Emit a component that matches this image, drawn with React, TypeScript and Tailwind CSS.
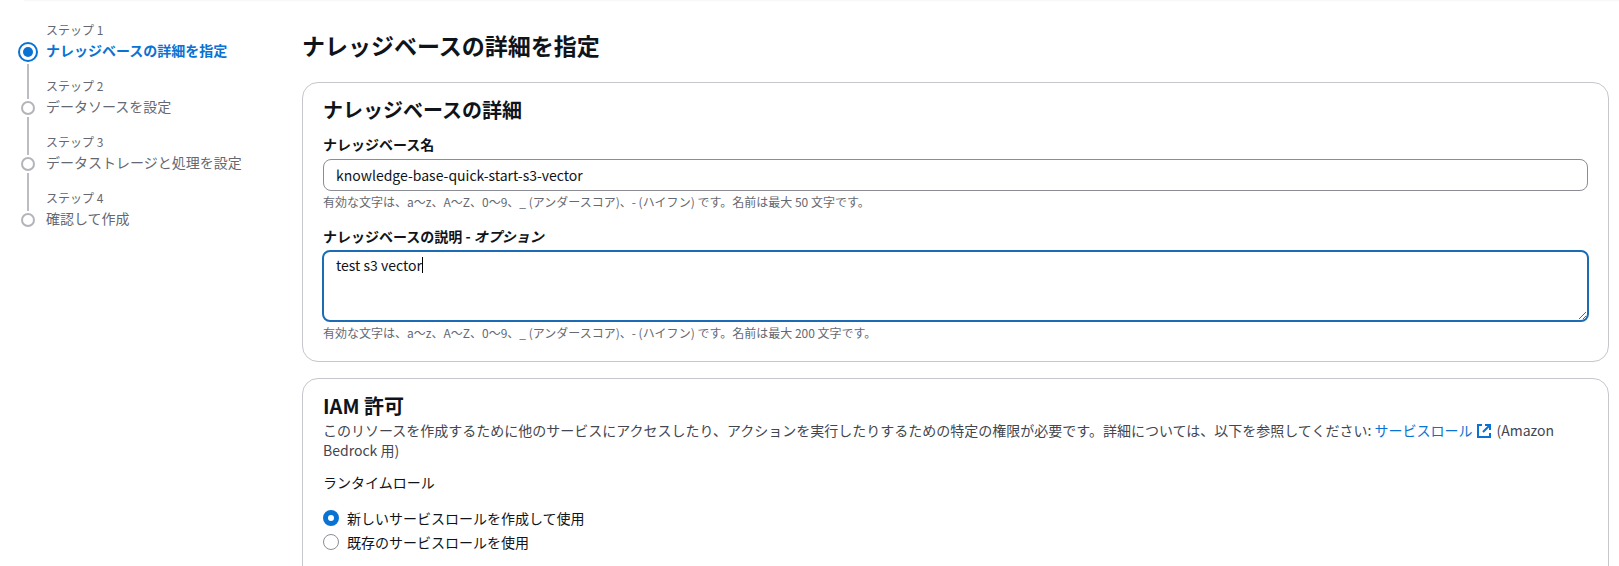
import React from 'react';

const steps = [
  'ナレッジベースの詳細を指定',
  'データソースを設定',
  'データストレージと処理を設定',
  '確認して作成',
];

const StepNav: React.FC = () => (
  <nav className="w-[302px] shrink-0 pt-[18px] pl-[18px]">
    <ol>
      {steps.map((title, i) => (
        <li key={title} className="flex gap-2">
          {/* Marker and the line that leads to the next step */}
          <div className="flex w-5 shrink-0 flex-col items-center pt-[22px] -mb-[22px]">
            <svg className="size-5 shrink-0" viewBox="0 0 20 20" fill="none">
              {i === 0 ? (
                <>
                  <circle cx="10" cy="10" r="9" stroke="#0972d3" strokeWidth="2" />
                  <circle cx="10" cy="10" r="5" fill="#0972d3" />
                </>
              ) : (
                <circle cx="10" cy="10" r="6" stroke="#b4b4bb" strokeWidth="2" />
              )}
            </svg>
            {i < steps.length - 1 && (
              <div className={i === 0 ? 'mt-0.5 -mb-px w-0.5 grow bg-[#bcbcc2]' : '-my-px w-0.5 grow bg-[#bcbcc2]'} />
            )}
          </div>
          <div className="pb-4">
            <p className="text-xs/5 text-[#656871]">ステップ {i + 1}</p>
            {i === 0 ? (
              <p aria-current="step" className="text-sm/5 font-bold text-[#0972d3]">{title}</p>
            ) : (
              <p className="text-sm/5 text-[#656871]">{title}</p>
            )}
          </div>
        </li>
      ))}
    </ol>
  </nav>
);

const ExternalIcon: React.FC = () => (
  <svg className="mx-1 inline-block size-4 align-[-3px]" viewBox="0 0 16 16" fill="none" stroke="currentColor" strokeWidth="2">
    <path d="M6 2H2v12h12v-4" />
    <path d="M9 2h5v5M14 2L7 9" />
  </svg>
);

const App: React.FC = () => {
  return (
    <div className="h-screen overflow-hidden bg-white font-['Noto_Sans_CJK_JP',sans-serif] text-[#0f141a]">
      {/* Soft edge under the top bar */}
      <div className="ml-6 h-0.5 bg-linear-to-b from-[#f6f6f7] to-white" />

      <div className="flex">
        <StepNav />

        <main className="min-w-0 grow pr-[10px]">
          <h1 className="pt-7 pb-[22px] text-[23px]/[30px] font-bold">ナレッジベースの詳細を指定</h1>

          <section className="rounded-2xl border border-[#c6c6cd] px-5 pt-[15px] pb-5">
            <h2 className="text-xl/6 font-bold">ナレッジベースの詳細</h2>

            <div className="mt-3">
              <label htmlFor="kb-name" className="block text-sm/5 font-bold">ナレッジベース名</label>
              <input
                id="kb-name"
                type="text"
                defaultValue="knowledge-base-quick-start-s3-vector"
                className="mt-[5px] block h-8 w-full rounded-lg border border-[#8c8c94] px-3 text-sm outline-none"
              />
              <p className="mt-[3px] text-xs/4 text-[#656871]">
                有効な文字は、a〜z、A〜Z、0〜9、_ (アンダースコア)、- (ハイフン) です。名前は最大 50 文字です。
              </p>
            </div>

            <div className="mt-4">
              <label htmlFor="kb-description" className="block text-sm/5 font-bold">
                ナレッジベースの説明 - <em>オプション</em>
              </label>
              <div className="relative -mx-px mt-1">
                <textarea
                  id="kb-description"
                  defaultValue="test s3 vector"
                  className="block h-[72px] w-full resize-y rounded-lg border-2 border-[#1b6cb5] px-3 py-[3px] text-sm/5 outline-none"
                />
                {/* Text caret */}
                <span className="absolute top-[7px] left-[100px] h-4 w-px bg-black" />
              </div>
              <p className="mt-[3px] text-xs/4 text-[#656871]">
                有効な文字は、a〜z、A〜Z、0〜9、_ (アンダースコア)、- (ハイフン) です。名前は最大 200 文字です。
              </p>
            </div>
          </section>

          <section className="mt-4 rounded-2xl border border-[#c6c6cd] px-5 pt-[15px] pb-12">
            <h2 className="text-xl/6 font-bold">IAM 許可</h2>
            <p className="mt-0.5 text-sm/5 text-[#424650]">
              このリソースを作成するために他のサービスにアクセスしたり、アクションを実行したりするための特定の権限が必要です。詳細については、以下を参照してください:{' '}
              <a href="#service-role" className="text-[#0972d3]">サービスロール<ExternalIcon /></a>
              (Amazon Bedrock 用)
            </p>

            <fieldset className="mt-3">
              <legend className="text-sm/5">ランタイムロール</legend>
              <div className="mt-4 flex flex-col gap-1">
                <label className="flex items-center gap-2 text-sm/5">
                  <input
                    type="radio"
                    name="runtime-role"
                    defaultChecked
                    className="size-4 appearance-none rounded-full border border-[#8c8c94] bg-white checked:border-5 checked:border-[#0972d3]"
                  />
                  新しいサービスロールを作成して使用
                </label>
                <label className="flex items-center gap-2 text-sm/5">
                  <input
                    type="radio"
                    name="runtime-role"
                    className="size-4 appearance-none rounded-full border border-[#8c8c94] bg-white checked:border-5 checked:border-[#0972d3]"
                  />
                  既存のサービスロールを使用
                </label>
              </div>
            </fieldset>
          </section>
        </main>
      </div>
    </div>
  );
};

export default App;
